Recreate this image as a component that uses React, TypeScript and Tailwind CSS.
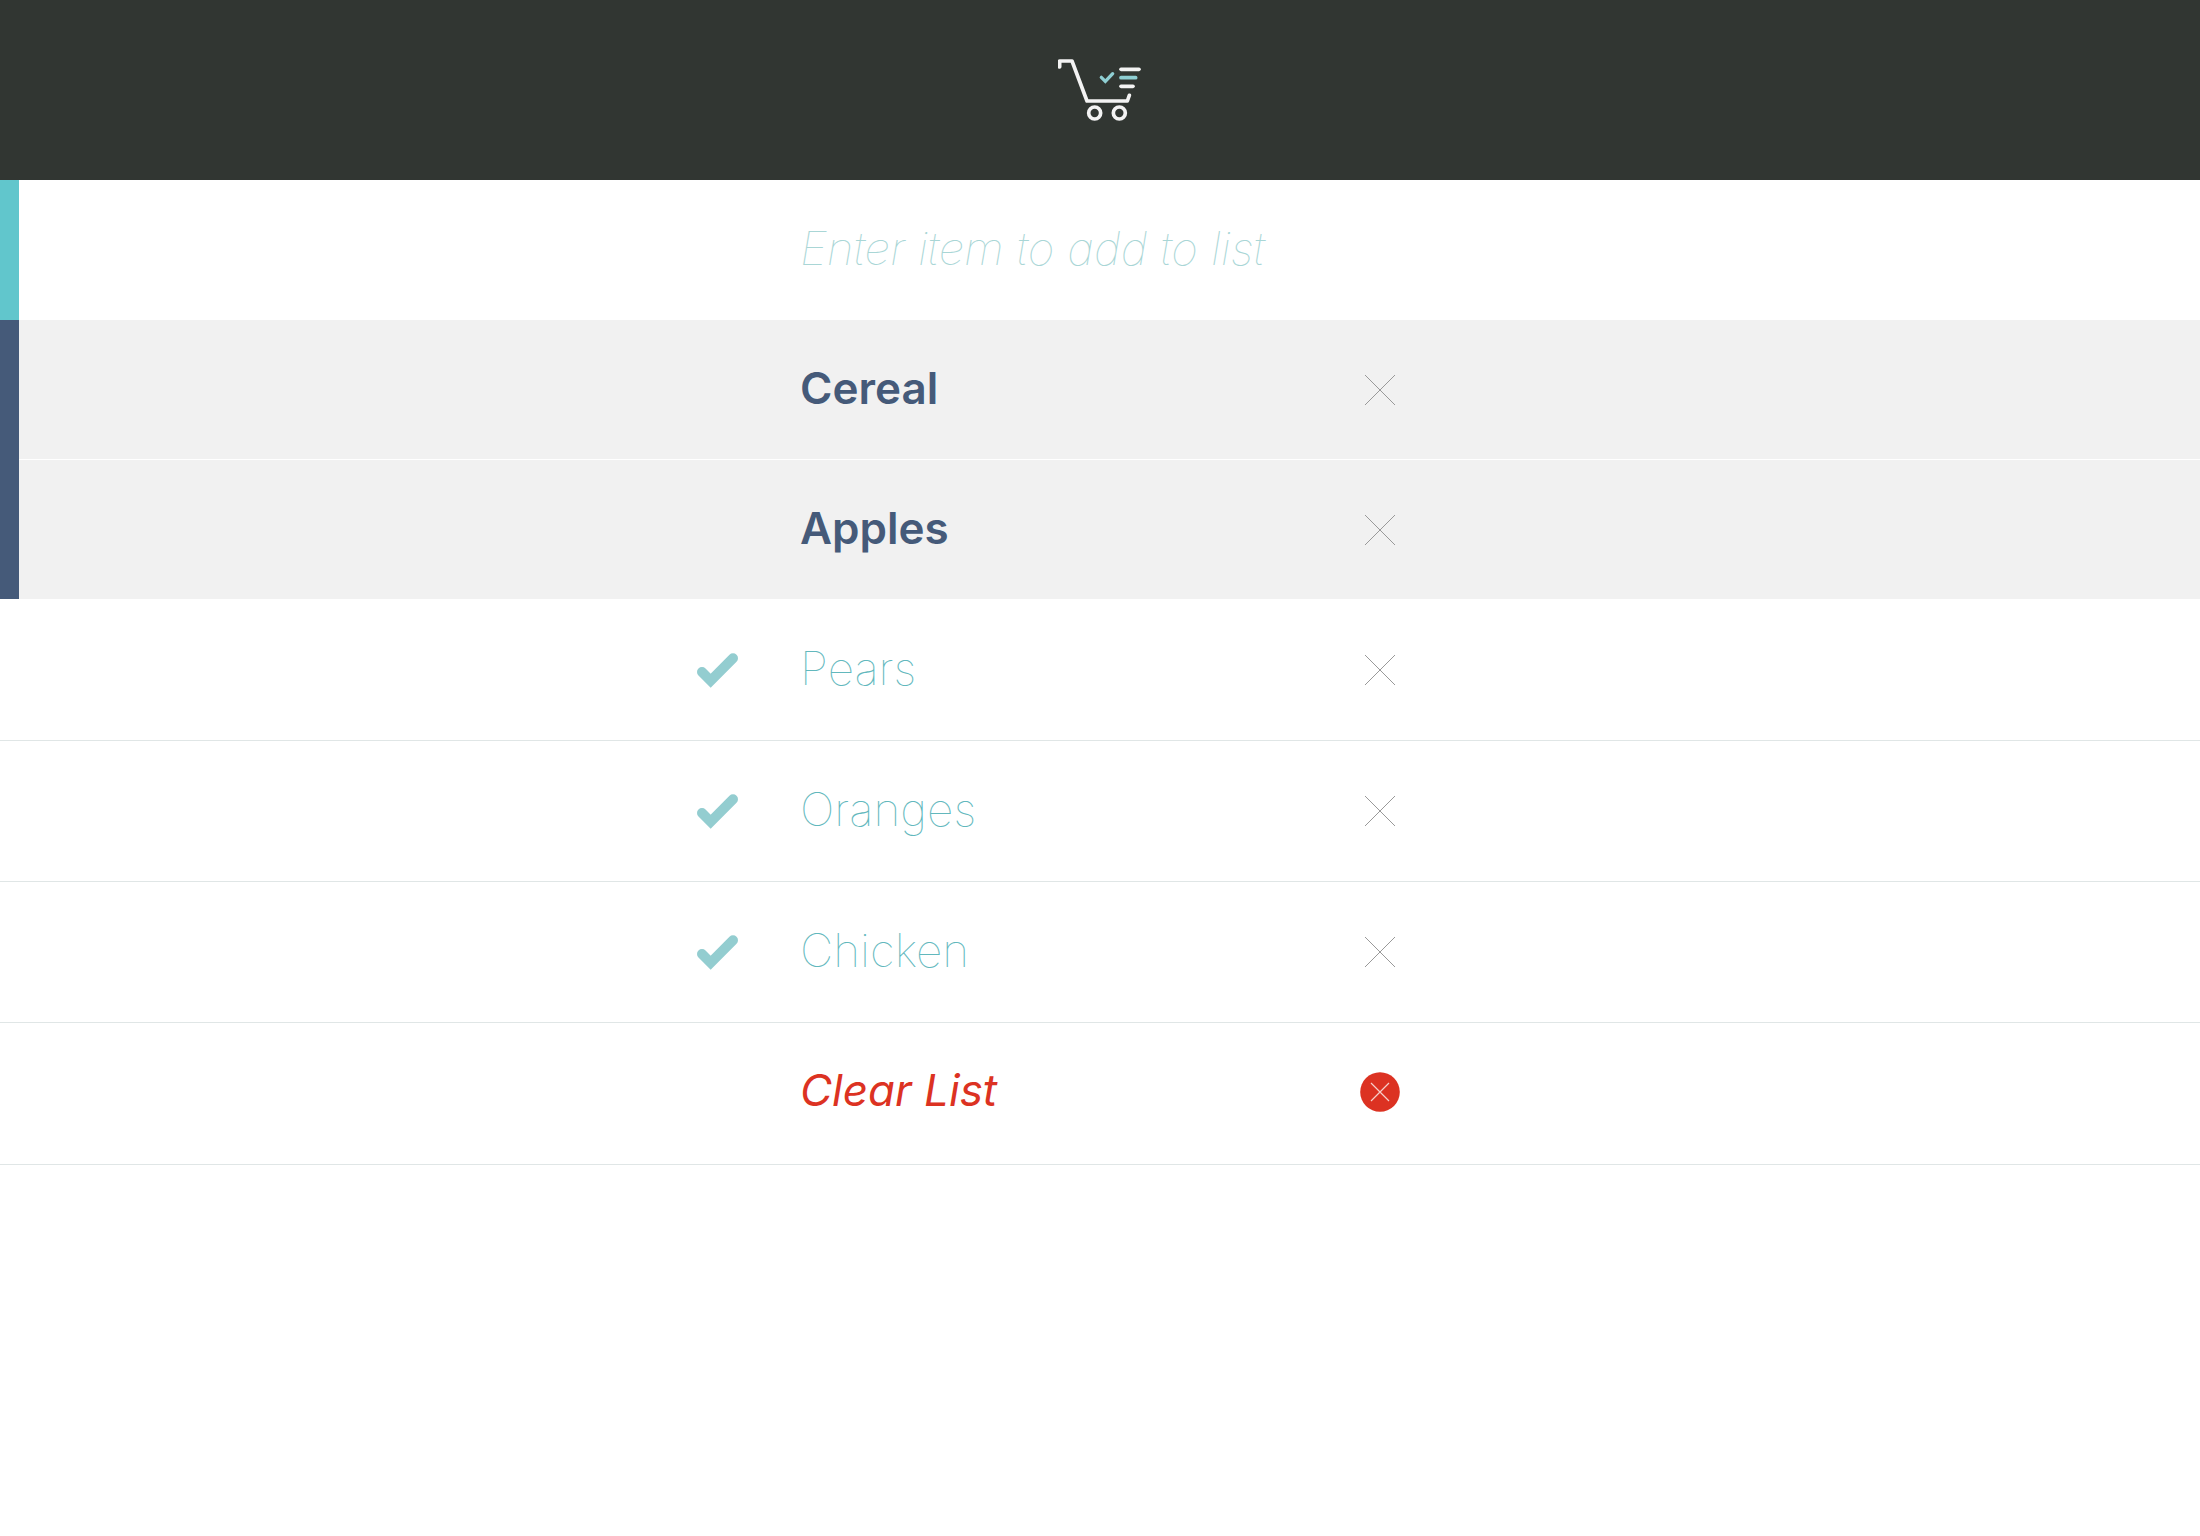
import { useState } from "react";
import type { FormEvent, ReactNode } from "react";

type Item = { id: number; name: string; bought: boolean };

const initialItems: Item[] = [
  { id: 1, name: "Cereal", bought: false },
  { id: 2, name: "Apples", bought: false },
  { id: 3, name: "Pears", bought: true },
  { id: 4, name: "Oranges", bought: true },
  { id: 5, name: "Chicken", bought: true },
];

function CartLogo() {
  return (
    <svg className="h-16 w-[84px]" viewBox="54 54 252 192" fill="none" role="img" aria-label="Shopping list">
      <g stroke="#f3f3f3" strokeWidth="11" strokeLinecap="round" strokeLinejoin="round">
        <path d="M59 81V63H96L141 183H262L268 166" />
        <path d="M243 88H297" />
        <path d="M243 139H279" />
        <circle cx="164" cy="219" r="18" />
        <circle cx="238" cy="219" r="18" />
      </g>
      <path d="M243 113H287" stroke="#8fcfd3" strokeWidth="11" strokeLinecap="round" />
      <path d="M184 112L196 124L218 101" stroke="#8fcfd3" strokeWidth="10" strokeLinecap="round" />
    </svg>
  );
}

function Tick() {
  return (
    <svg className="h-[35px] w-[41px]" viewBox="50 99 123 105" fill="none" aria-hidden="true">
      <path d="M65 156L91 182L158 115" stroke="#93cdd0" strokeWidth="30" strokeLinecap="round" />
    </svg>
  );
}

function Cross() {
  return (
    <svg className="size-[30px]" viewBox="0 0 30 30" fill="none" aria-hidden="true">
      <path d="M0 0L30 30M30 0L0 30" stroke="#999999" strokeWidth="1" />
    </svg>
  );
}

function Columns({ mark, children }: { mark?: ReactNode; children: ReactNode }) {
  return (
    <div className="grid min-w-0 flex-1 grid-cols-[1fr_600px_1fr] items-center">
      <div className="flex justify-end pr-[62px]">{mark}</div>
      <div className="flex items-center justify-between">{children}</div>
    </div>
  );
}

export default function App() {
  const [items, setItems] = useState(initialItems);
  const [draft, setDraft] = useState("");

  const add = (e: FormEvent) => {
    e.preventDefault();
    const name = draft.trim();
    if (!name) return;
    setItems([{ id: Date.now(), name, bought: false }, ...items]);
    setDraft("");
  };
  const toggle = (id: number) =>
    setItems(items.map((i) => (i.id === id ? { ...i, bought: !i.bought } : i)));
  const remove = (id: number) => setItems(items.filter((i) => i.id !== id));

  const renderItem = (item: Item) => (
    <li
      key={item.id}
      className={
        item.bought
          ? "flex h-[141px] border-b border-[#e0e6e6]"
          : "relative flex h-[140px] border-b border-white bg-[#f1f1f1] before:absolute before:top-0 before:-bottom-px before:left-0 before:w-[19px] before:bg-[#455a79] last:before:bottom-0"
      }
    >
      <Columns
        mark={
          item.bought && (
            <label htmlFor={`item-${item.id}`}>
              <Tick />
            </label>
          )
        }
      >
        <div className="relative">
          <input
            id={`item-${item.id}`}
            type="checkbox"
            className="sr-only"
            checked={item.bought}
            onChange={() => toggle(item.id)}
          />
          <label
            htmlFor={`item-${item.id}`}
            className={
              item.bought
                ? "block cursor-pointer pb-1 text-[46px] leading-14 font-thin text-[#62b8bd]"
                : "block cursor-pointer pb-1 text-[44px] leading-14 font-semibold text-[#455a79]"
            }
          >
            {item.name}
          </label>
        </div>
        <button
          type="button"
          aria-label={`Remove ${item.name}`}
          onClick={() => remove(item.id)}
          className="flex size-10 items-center justify-center"
        >
          <Cross />
        </button>
      </Columns>
    </li>
  );

  return (
    <div className="min-h-screen bg-white font-['Inter',sans-serif]">
      <header className="flex h-[180px] items-center justify-center bg-[#313632]">
        <CartLogo />
      </header>
      <main>
        <form
          onSubmit={add}
          className="relative flex h-[140px] before:absolute before:inset-y-0 before:left-0 before:w-[19px] before:bg-[#61c6cc]"
        >
          <Columns>
            <input
              type="text"
              aria-label="Item to add"
              placeholder="Enter item to add to list"
              value={draft}
              onChange={(e) => setDraft(e.target.value)}
              className="w-full pb-1 text-[46px] leading-14 font-thin text-[#62b8bd] italic outline-none placeholder:text-[#a9d6d6]"
            />
          </Columns>
        </form>
        <ul>{items.filter((i) => !i.bought).map(renderItem)}</ul>
        <ul>{items.filter((i) => i.bought).map(renderItem)}</ul>
        <div className="flex h-[142px] border-b border-[#e0e6e6] pb-1">
          <Columns>
            <button
              type="button"
              onClick={() => setItems([])}
              className="flex w-full items-center justify-between text-[44px] leading-14 text-[#dc3222] italic"
            >
              <span className="pb-1">Clear List</span>
              <svg className="size-10" viewBox="0 0 40 40" fill="none" aria-hidden="true">
                <circle cx="20" cy="20" r="19.8" fill="#dc3222" />
                <path d="M11 11L29 29M29 11L11 29" stroke="#f6cfca" strokeWidth="1.2" />
              </svg>
            </button>
          </Columns>
        </div>
      </main>
    </div>
  );
}
